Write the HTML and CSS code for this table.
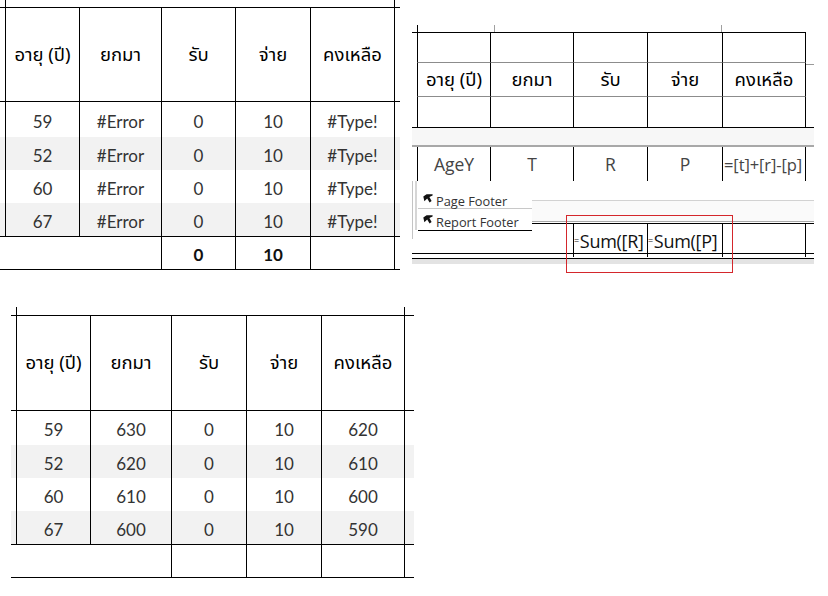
FILE: index.html
```html
<!DOCTYPE html>
<html lang="th">
<head>
<meta charset="utf-8">
<title>Report</title>
<link rel="stylesheet" href="styles.css">
</head>
<body>
<div class="canvas">

  <!-- Report view with errors -->
  <section class="shot shot-a">
    <div class="tbl tbl-a">
      <div class="row stub"><span class="p"></span><span class="c"></span><span class="n"></span><span class="n"></span><span class="n"></span><span class="n"></span><span class="e"></span></div>
      <div class="row head"><span class="p"></span><span class="c th">อายุ (ปี)</span><span class="c th">ยกมา</span><span class="c th">รับ</span><span class="c th">จ่าย</span><span class="c th">คงเหลือ</span><span class="e"></span></div>
      <div class="row data first"><span class="p"></span><span class="c">59</span><span class="c">#Error</span><span class="c">0</span><span class="c">10</span><span class="c">#Type!</span><span class="e"></span></div>
      <div class="row data alt"><span class="p"></span><span class="c">52</span><span class="c">#Error</span><span class="c">0</span><span class="c">10</span><span class="c">#Type!</span><span class="e"></span></div>
      <div class="row data"><span class="p"></span><span class="c">60</span><span class="c">#Error</span><span class="c">0</span><span class="c">10</span><span class="c">#Type!</span><span class="e"></span></div>
      <div class="row data alt"><span class="p"></span><span class="c">67</span><span class="c">#Error</span><span class="c">0</span><span class="c">10</span><span class="c">#Type!</span><span class="e"></span></div>
      <div class="row foot"><span class="m"></span><span class="c b">0</span><span class="c b">10</span><span class="c"></span><span class="e"></span></div>
    </div>
  </section>

  <!-- Design view -->
  <section class="shot shot-b">
    <div class="ticks"><span class="tk k1"></span><span class="tk k2"></span><span class="tk k3"></span></div>
    <div class="dhead">
      <div class="drow r1"><span class="p"></span><span class="c"></span><span class="c"></span><span class="c"></span><span class="c"></span><span class="c last"></span></div>
      <div class="drow r2"><span class="p"></span><span class="c th2">อายุ (ปี)</span><span class="c th2">ยกมา</span><span class="c th2">รับ</span><span class="c th2">จ่าย</span><span class="c th2">คงเหลือ</span></div>
      <div class="drow r3"><span class="p"></span><span class="c"></span><span class="c"></span><span class="c"></span><span class="c"></span><span class="c last"></span></div>
      <span class="rulemark"></span>
    </div>
    <div class="hline"></div>
    <div class="band"></div>
    <div class="ddetail"><span class="p"></span><span class="c">AgeY</span><span class="c">T</span><span class="c">R</span><span class="c">P</span><span class="c expr">=[t]+[r]-[p]</span><span class="tail"></span></div>
    <div class="lower">
      <div class="sections">
        <div class="sec-inner">
          <div class="secbar pf"><svg class="ico" width="10" height="9" viewBox="0 0 10 9"><path d="M0.3 2.6 L3.6 0.2 L9.6 0.2 L9.6 1.6 L6.4 3 L8.6 7 L6.6 8.4 L4.2 4.4 L1.4 7.2 Z" fill="#111"/></svg><span>Page Footer</span></div>
          <div class="secbar rf"><svg class="ico" width="10" height="9" viewBox="0 0 10 9"><path d="M0.3 2.6 L3.6 0.2 L9.6 0.2 L9.6 1.6 L6.4 3 L8.6 7 L6.6 8.4 L4.2 4.4 L1.4 7.2 Z" fill="#111"/></svg><span>Report Footer</span></div>
        </div>
      </div>
      <div class="rightpart">
        <div class="pfband"></div>
        <div class="frow"><span class="g"></span><span class="c sum"><small>=</small>Sum([R]</span><span class="c sum"><small>=</small>Sum([P]</span><span class="c"></span><span class="c"></span></div>
      </div>
    </div>
    <div class="dbottom"></div>
    <div class="dshade"></div>
    <div class="redbox"></div>
  </section>

  <!-- Report view corrected -->
  <section class="shot shot-c">
    <div class="tbl tbl-c">
      <div class="row stub"><span class="p"></span><span class="c"></span><span class="n"></span><span class="n"></span><span class="n"></span><span class="n"></span><span class="e"></span></div>
      <div class="row head"><span class="p"></span><span class="c th">อายุ (ปี)</span><span class="c th">ยกมา</span><span class="c th">รับ</span><span class="c th">จ่าย</span><span class="c th">คงเหลือ</span><span class="e"></span></div>
      <div class="row data first"><span class="p"></span><span class="c">59</span><span class="c">630</span><span class="c">0</span><span class="c">10</span><span class="c">620</span><span class="e"></span></div>
      <div class="row data alt"><span class="p"></span><span class="c">52</span><span class="c">620</span><span class="c">0</span><span class="c">10</span><span class="c">610</span><span class="e"></span></div>
      <div class="row data"><span class="p"></span><span class="c">60</span><span class="c">610</span><span class="c">0</span><span class="c">10</span><span class="c">600</span><span class="e"></span></div>
      <div class="row data alt"><span class="p"></span><span class="c">67</span><span class="c">600</span><span class="c">0</span><span class="c">10</span><span class="c">590</span><span class="e"></span></div>
      <div class="row foot"><span class="m"></span><span class="c"></span><span class="c"></span><span class="c"></span><span class="e"></span></div>
    </div>
  </section>

</div>
</body>
</html>
```
FILE: styles.css
```css
* { box-sizing: border-box; }
html, body { margin: 0; padding: 0; background: #fff; }
body { font-family: "Lato", "Noto Sans", sans-serif; color: #333; }

.canvas { position: relative; width: 828px; height: 596px; overflow: hidden; }
.shot { position: absolute; }
.shot-a { left: 0; top: 0; width: 400px; }
.shot-c { left: 11px; top: 307px; width: 403px; }
.shot-b { left: 412px; top: 25px; width: 402px; height: 250px; }

/* ---------- report tables ---------- */
.row { display: grid; align-items: stretch; }
.tbl-a .row { grid-template-columns: 5px 74px 82px 74px 75px 84px 6px; width: 400px; }
.tbl-c .row { grid-template-columns: 5px 74px 81px 75px 75px 83px 10px; width: 403px; }

.row > span { display: flex; align-items: center; justify-content: center; white-space: nowrap; }
.row .c, .row .e { border-left: 1px solid #000; }
.row .m { grid-column: span 3; }

.stub { height: 7px; }
.tbl-c .stub { height: 8px; }

.head { border-top: 1px solid #000; height: 94px; }
.tbl-c .head { height: 95px; }
.th { font-family: "Tahoma", "Noto Sans Thai", "Leelawadee UI", "DejaVu Sans", sans-serif; font-size: 18.5px; color: #000; }

.data { font-size: 17px; color: #333; height: 33px; }
.data > span { padding-top: 4px; }
.data.first { border-top: 1px solid #000; height: 36px; }
.data.first > span { padding-top: 3px; }
.tbl-c .data.first { height: 35px; }
.data.alt { background: #f2f2f2; }

.foot { border-top: 1px solid #000; border-bottom: 1px solid #000; height: 34px; font-size: 17px; }
.foot > span { padding-top: 3px; }
.foot .b { font-weight: 700; color: #111; }

/* ---------- design view ---------- */
.ticks { height: 7px; display: flex; }
.tk { width: 1px; height: 7px; }
.k1 { margin-left: 5px; background: #000; }
.k2 { margin-left: 76px; background: #a0a0a0; }
.k3 { margin-left: 226px; background: #a0a0a0; }

.dhead { width: 394px; border-top: 1px solid #000; position: relative; }
.rulemark { position: absolute; left: 394px; top: 31px; width: 8px; height: 1px; background: #9a9a9a; }
.drow { display: grid; grid-template-columns: 5px 73px 83px 74px 75px 84px; }
.drow .c { border-left: 1px solid #000; }
.drow .c:last-child { border-right: 1px solid #000; }
.drow.r1 { height: 29px; }
.drow.r2 { height: 34px; }
.drow.r3 { height: 31px; }
.drow.r2 .c, .drow.r3 .c { border-top: 1px solid #8c8c8c; }
.th2 { display: flex; align-items: center; justify-content: center; font-family: "Tahoma", "Noto Sans Thai", "DejaVu Sans", sans-serif; font-size: 18.5px; color: #000; padding-top: 1px; }

.hline { height: 1px; background: #000; }
.band { height: 19px; background: #f7f7f7; border-bottom: 2px solid #a8a8a8; }

.ddetail { display: grid; grid-template-columns: 5px 73px 83px 74px 75px 83px 9px; height: 34px; font-family: "Open Sans", "Noto Sans", sans-serif; font-size: 17.5px; color: #444; }
.ddetail > span { display: flex; align-items: center; justify-content: center; white-space: nowrap; }
.ddetail .c, .ddetail .tail { border-left: 1px solid #000; }
.ddetail .expr { justify-content: flex-start; padding-left: 1px; font-size: 16.5px; letter-spacing: -0.1px; overflow: hidden; }

.lower { display: flex; height: 75px; }
.sections { width: 120px; height: 58px; border-left: 1px solid #c4c4c4; padding-left: 2px; }
.sec-inner { border-left: 2px solid #d6d6d6; height: 49px; }
.secbar { display: flex; align-items: center; margin-left: 1px; font-family: "Open Sans", "Noto Sans", sans-serif; font-size: 12.8px; color: #333; white-space: nowrap; }
.secbar .ico { margin-left: 5px; margin-right: 3px; margin-top: -5px; flex: none; }
.secbar.pf { height: 28px; border-bottom: 1px solid #c8c8c8; padding-top: 12px; }
.secbar.rf { height: 22px; border-bottom: 1px solid #000; padding-top: 4px; }

.rightpart { width: 282px; }
.pfband { height: 41px; background: #fafafa; border-top: 19px solid #fff; border-bottom: 1px solid #a8a8a8; box-shadow: inset 0 1px 0 #d2d2d2; }
.frow { display: grid; grid-template-columns: 41px 74px 75px 83px 9px; height: 34px; border-top: 1px solid #000; margin-top: 1px; }
.frow > span { display: flex; align-items: center; white-space: nowrap; overflow: hidden; }
.frow .c { border-left: 1px solid #000; }
.sum { font-family: "Open Sans", "Noto Sans", sans-serif; font-size: 18px; color: #111; letter-spacing: -0.3px; }
.sum small { font-size: 9px; margin-right: 1px; }

.dbottom { height: 6px; border-top: 1px solid #000; border-bottom: 1px solid #000; margin-top: -3px; }
.dshade { height: 5px; background: #e3e3e3; }

.redbox { position: absolute; left: 154px; top: 190px; width: 167px; height: 58px; border: 1px solid #d4272c; }
```
